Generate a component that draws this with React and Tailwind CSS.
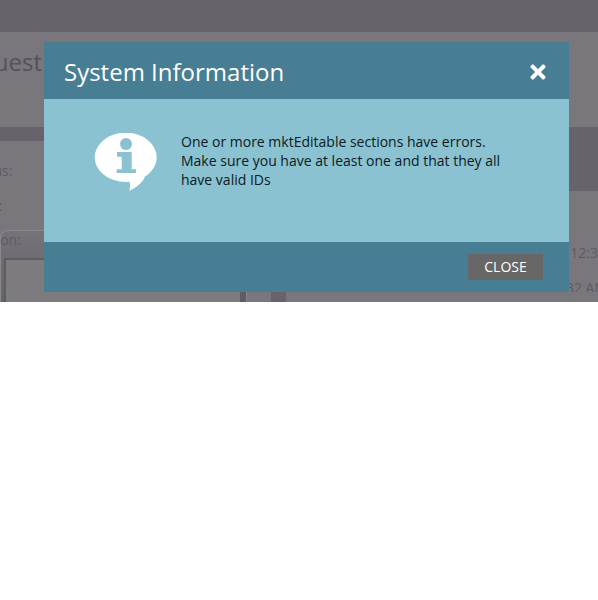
import { FaTimes } from "react-icons/fa";

function InfoBubble() {
  return (
    <svg width="64" height="60" viewBox="0 0 64 60" className="shrink-0 mt-[1px]">
      <ellipse cx="31.7" cy="24.3" rx="31" ry="24.6" fill="#fff" />
      <path d="M51 44 C48 50 42 55 35.3 57.7 C36.5 54 36.3 51 35 47 Z" fill="#fff" />
      <circle cx="32" cy="11" r="6" fill="#8ac2d2" />
      <path d="M23 19 H37.7 V36.3 H42 V40 H22.7 V36.3 H27.7 V23.7 H23 Z" fill="#8ac2d2" />
    </svg>
  );
}

function Modal() {
  return (
    <div className="absolute left-[44px] top-[42px] w-[525px] h-[250px] flex flex-col bg-[#8ac2d2]">
      {/* Header */}
      <div className="h-[57px] shrink-0 flex items-center justify-between pl-5 pr-5 pt-[2px] bg-[#477e93] text-white">
        <h1 className="text-[24px] leading-[33px] font-normal">System Information</h1>
        <FaTimes className="w-[22px] h-[22px] mt-[1px] text-white" />
      </div>

      {/* Body */}
      <div className="flex-1 flex items-start pl-[50px] pt-[33px]">
        <InfoBubble />
        <p className="ml-[23px] w-[330px] text-[14px] leading-[19px] text-[#0c1a22]">
          One or more mktEditable sections have errors.
          <br />
          Make sure you have at least one and that they all
          <br />
          have valid IDs
        </p>
      </div>

      {/* Footer */}
      <div className="h-[50px] shrink-0 flex items-center justify-end pr-[26px] bg-[#477e93]">
        <button className="w-[75px] h-[26px] bg-[#676767] text-white text-[14px] leading-[26px]">
          CLOSE
        </button>
      </div>
    </div>
  );
}

export default function App() {
  return (
    <div className="relative h-[302px] w-full overflow-hidden bg-[#7a777c] font-['Open_Sans',sans-serif] text-[#55525a]">
      {/* Dimmed page behind the dialog */}
      <div className="h-8 bg-[#68636a]" />
      <div className="h-[95px] pt-[13px]">
        <div className="w-[42px] flex justify-end overflow-hidden">
          <span className="text-[24px] leading-[33px] whitespace-nowrap">Request</span>
        </div>
      </div>

      <div className="flex h-[175px]">
        {/* Left column */}
        <div className="w-[247px] shrink-0 flex flex-col">
          <div className="h-[14px] bg-[#68636a]" />
          <div className="w-full text-[14px] leading-[19px] text-[#5f5c63]">
            <div className="w-full pt-[20px]">
              <p className="-ml-[32px]">Status:</p>
              <p className="-ml-[32px] mt-[16px]">Date:</p>
            </div>
          </div>
          <div className="mt-[15px] flex-1 border border-b-0 border-[#8a888c] rounded-tl-lg bg-gradient-to-b from-[#757378] to-[#66646b]">
            <p className="text-[14px] leading-[19px] text-[#5f5c63] -ml-[33px] -mt-[1px]">Version:</p>
            <div className="ml-[3px] mt-[9px] h-full border-l-[2px] border-t-[2px] border-r-[6px] border-[#5f5d64] bg-[#7d7b7e]" />
          </div>
        </div>

        {/* Right column */}
        <div className="flex-1 flex flex-col ml-[24px]">
          <div className="h-16 bg-[#68636a]" />
          <div className="flex-1 flex flex-col items-end overflow-hidden text-[14px] leading-[19px] text-[#5f5c63]">
            <p className="mt-[52px] -mr-[8px] whitespace-nowrap">12:37</p>
            <p className="mt-[16px] -mr-[9px] whitespace-nowrap">32 AM</p>
          </div>
          <div className="w-[15px] h-[10px] bg-[#68636a]" />
        </div>
      </div>

      <Modal />
    </div>
  );
}
